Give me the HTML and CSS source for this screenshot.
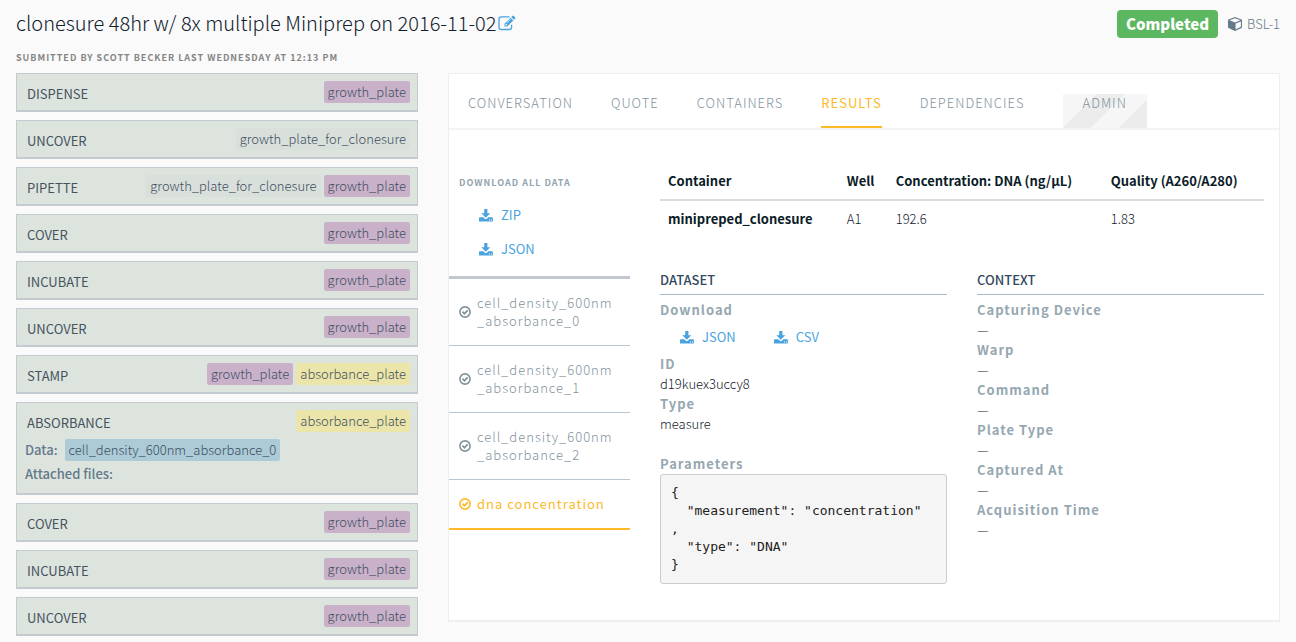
FILE: index.html
```html
<!DOCTYPE html>
<html lang="en">
<head>
<meta charset="utf-8">
<title>clonesure 48hr w/ 8x multiple Miniprep on 2016-11-02</title>
<link rel="stylesheet" href="styles.css">
</head>
<body>
<svg class="sprite" aria-hidden="true">
  <symbol id="download" viewBox="0 0 14 13"><path fill-rule="evenodd" d="M5.200 0h3.200v4.300h2.900L6.800 8.800 2.300 4.300h2.900zM.6 8.300h3.700l1.500 1.500q1 .8 2 0l1.500-1.500h3.900q.7 0 .7.700v2.900q0 .7-.7.700H.6q-.6 0-.6-.7V9q0-.7.6-.7zM10 10.500v1h1v-1zm2 0v1h1v-1z"/></symbol>
  <symbol id="check" viewBox="0 0 12 12"><circle cx="6" cy="6" r="5.100" fill="none" stroke="currentColor" stroke-width="1.600"/><path d="M3.400 5.700l2 2 3.300-3.300" fill="none" stroke="currentColor" stroke-width="1.700"/></symbol>
</svg>
<header class="header">
  <div class="title-row">
    <h1 class="title">clonesure 48hr w/ 8x multiple Miniprep on 2016-11-02</h1>
    <button class="edit" type="button" aria-label="Edit title">
      <svg class="edit-icon" viewBox="0 0 18 16"><path d="M11.500 1.900H3.300Q1 1.900 1 4.200v8Q1 14.500 3.300 14.500h8q2.300 0 2.300-2.300V9.700" fill="none" stroke="currentColor" stroke-width="1.300"/><path fill-rule="evenodd" d="M6.500 11.500V8.700l6-6 2.800 2.800-6 6zM7.500 9.300v1.200h1.200l.6-.6-1.200-1.200zM9 8l3.600-3.600-.4-.4L8.600 7.600zM13.200 2l1.100-1.100q.7-.6 1.400 0l1.400 1.400q.6.700 0 1.400L16 4.800z"/></svg>
    </button>
  </div>
  <div class="status">
    <span class="badge">Completed</span>
    <svg class="cube" viewBox="0 0 14 14"><path fill-rule="evenodd" d="M7 0l6.500 2.500q.5.200.5.800v6.800q0 .6-.5.900L7 14 .5 11q-.5-.3-.5-.9V3.300q0-.6.500-.8zM7 1.200L1.500 3.300 7 5.400l5.500-2.100zM7.600 6.500v5.900l5.300-2.600V4.500z"/></svg>
    <span class="bsl">BSL-1</span>
  </div>
</header>
<p class="submitted">Submitted by Scott Becker last Wednesday at 12:13 PM</p>
<div class="layout">
  <ol class="steps">
    <li class="step"><div class="step-head"><span class="op">Dispense</span><span class="tag growth">growth_plate</span></div></li>
    <li class="step"><div class="step-head"><span class="op">Uncover</span><span class="tag clonesure">growth_plate_for_clonesure</span></div></li>
    <li class="step"><div class="step-head"><span class="op">Pipette</span><span class="tag clonesure">growth_plate_for_clonesure</span><span class="tag growth">growth_plate</span></div></li>
    <li class="step"><div class="step-head"><span class="op">Cover</span><span class="tag growth">growth_plate</span></div></li>
    <li class="step"><div class="step-head"><span class="op">Incubate</span><span class="tag growth">growth_plate</span></div></li>
    <li class="step"><div class="step-head"><span class="op">Uncover</span><span class="tag growth">growth_plate</span></div></li>
    <li class="step"><div class="step-head"><span class="op">Stamp</span><span class="tag growth">growth_plate</span><span class="tag absorbance">absorbance_plate</span></div></li>
    <li class="step">
      <div class="step-head"><span class="op">Absorbance</span><span class="tag absorbance">absorbance_plate</span></div>
      <div class="step-data"><span>Data:</span><span class="tag data">cell_density_600nm_absorbance_0</span></div>
      <div class="step-files">Attached files:</div>
    </li>
    <li class="step"><div class="step-head"><span class="op">Cover</span><span class="tag growth">growth_plate</span></div></li>
    <li class="step"><div class="step-head"><span class="op">Incubate</span><span class="tag growth">growth_plate</span></div></li>
    <li class="step"><div class="step-head"><span class="op">Uncover</span><span class="tag growth">growth_plate</span></div></li>
  </ol>
  <main class="panel">
    <nav class="tabs">
      <a class="tab" href="#">Conversation</a>
      <a class="tab" href="#">Quote</a>
      <a class="tab" href="#">Containers</a>
      <a class="tab active" href="#">Results</a>
      <a class="tab" href="#">Dependencies</a>
      <a class="tab admin" href="#">Admin</a>
    </nav>
    <div class="results">
      <aside class="sidebar">
        <h2 class="side-title">Download all data</h2>
        <div class="side-links">
          <a class="dl" href="#"><svg class="dl-icon"><use href="#download"/></svg>ZIP</a>
          <a class="dl" href="#"><svg class="dl-icon"><use href="#download"/></svg>JSON</a>
        </div>
        <ul class="datasets">
          <li><a class="dataset" href="#"><svg class="check"><use href="#check"/></svg><span>cell_density_600nm<wbr>_absorbance_0</span></a></li>
          <li><a class="dataset" href="#"><svg class="check"><use href="#check"/></svg><span>cell_density_600nm<wbr>_absorbance_1</span></a></li>
          <li><a class="dataset" href="#"><svg class="check"><use href="#check"/></svg><span>cell_density_600nm<wbr>_absorbance_2</span></a></li>
          <li><a class="dataset selected" href="#"><svg class="check"><use href="#check"/></svg><span>dna concentration</span></a></li>
        </ul>
      </aside>
      <div class="detail">
        <table class="table">
          <thead><tr><th class="c-container">Container</th><th class="c-well">Well</th><th class="c-conc">Concentration: DNA (ng/µL)</th><th>Quality (A260/A280)</th></tr></thead>
          <tbody><tr><th scope="row">minipreped_clonesure</th><td>A1</td><td>192.6</td><td>1.83</td></tr></tbody>
        </table>
        <div class="info">
          <section>
            <h2 class="section-title">Dataset</h2>
            <h3 class="label">Download</h3>
            <div class="dl-row">
              <a class="dl" href="#"><svg class="dl-icon"><use href="#download"/></svg>JSON</a>
              <a class="dl" href="#"><svg class="dl-icon"><use href="#download"/></svg>CSV</a>
            </div>
            <dl class="list">
              <dt class="label">ID</dt><dd>d19kuex3uccy8</dd>
              <dt class="label">Type</dt><dd>measure</dd>
            </dl>
            <h3 class="label params">Parameters</h3>
            <pre class="code">{
  "measurement": "concentration"
,
  "type": "DNA"
}</pre>
          </section>
          <section>
            <h2 class="section-title">Context</h2>
            <dl class="list">
              <dt class="label">Capturing Device</dt><dd>—</dd>
              <dt class="label">Warp</dt><dd>—</dd>
              <dt class="label">Command</dt><dd>—</dd>
              <dt class="label">Plate Type</dt><dd>—</dd>
              <dt class="label">Captured At</dt><dd>—</dd>
              <dt class="label">Acquisition Time</dt><dd>—</dd>
            </dl>
          </section>
        </div>
      </div>
    </div>
  </main>
</div>
</body>
</html>
```
FILE: styles.css
```css
* { box-sizing: border-box; }
body {
  margin: 0;
  padding: 8px 16px 0;
  background: #fafafa;
  color: #14222d;
  font: 300 13px/20px "Noto Sans CJK SC", "Noto Sans", sans-serif;
}
h1, h2, h3, p, ol, ul, dl, dd, pre { margin: 0; padding: 0; }
ol, ul { list-style: none; }
a { text-decoration: none; }
svg { flex: none; fill: currentColor; }
.sprite { position: absolute; width: 0; height: 0; }

.header { display: flex; justify-content: space-between; align-items: flex-start; height: 32px; }
.title-row { display: flex; align-items: center; gap: 2px; }
.title { font-size: 20px; line-height: 30px; font-weight: 300; color: #10202c; }
.edit { padding: 0; border: 0; background: none; color: #4aa3df; display: flex; }
.edit-icon { width: 18px; height: 16px; }
.status { display: flex; align-items: center; padding-top: 2px; color: #64798a; }
.badge {
  margin-right: 10px;
  padding: 0 9px;
  border-radius: 4px;
  background: #5cb860;
  color: #fff;
  font-size: 15px;
  line-height: 28px;
  font-weight: 900;
}
.cube { width: 14px; height: 14px; margin-right: 5px; }
.submitted {
  margin-top: 8px;
  color: #858585;
  font-size: 9px;
  font-weight: 700;
  letter-spacing: 1px;
  text-transform: uppercase;
}

.layout {
  display: grid;
  grid-template-columns: 402fr 832fr;
  gap: 30px;
  align-items: start;
  margin-top: 5px;
}
.steps { display: grid; gap: 8px; padding-bottom: 6px; }
.step {
  padding: 7px 7px 7px 8px;
  border: 1px solid #c3cad0;
  border-width: 1px 1px 2px;
  background: #dde4dd;
  color: #3f4f60;
}
.step-head { display: flex; gap: 3px; height: 22px; }
.op {
  flex: 1;
  padding: 3px 2px 0;
  color: #46535f;
  font-weight: 400;
  text-transform: uppercase;
}
.tag { padding: 0 4px; border-radius: 2px; line-height: 22px; }
.growth { background: #c9b1ca; }
.clonesure { background: #d9dfdb; }
.absorbance { background: #ebe5a9; }
.step-data { display: flex; gap: 7px; margin-top: 7px; line-height: 22px; font-weight: 500; color: #64798c; }
.data { background: #adcad7; color: #3a4f60; font-weight: 300; }
.step-files { margin-top: 3px; padding-bottom: 2px; line-height: 20px; font-weight: 500; color: #64798c; }

.panel { min-width: 0; background: #fff; border: 1px solid #edf0f0; border-bottom-width: 2px; }
.tabs { display: flex; gap: 38px; padding: 20px 19px 0; border-bottom: 2px solid #f1f3f4; }
.tab {
  height: 34px;
  border-bottom: 2px solid transparent;
  color: #82939e;
  line-height: 18px;
  letter-spacing: 1px;
  text-transform: uppercase;
}
.tab.active { color: #fdb927; border-color: #fdb927; font-weight: 400; }
.tab.admin {
  padding: 0 20px;
  border: 0;
  background: linear-gradient(-45deg, #ececec 20px, #f6f6f6 20px, #f6f6f6 40px, #ececec 40px, #ececec 60px, #f6f6f6 60px);
}

.results { display: grid; grid-template-columns: 181fr 604fr; gap: 30px; padding: 33px 15px 36px 0; }
.side-title {
  margin: 10px 0 12px 10px;
  color: #93a4af;
  font-size: 9px;
  line-height: 20px;
  font-weight: 700;
  letter-spacing: 1px;
  text-transform: uppercase;
}
.side-links { display: grid; gap: 14px; padding: 0 30px 17px; }
.dl { display: inline-flex; align-items: center; gap: 8px; color: #4aa3df; font-weight: 400; }
.dl-icon { width: 14px; height: 13px; }
.datasets { border-top: 3px solid #c1c6cf; }
.dataset {
  display: flex;
  align-items: center;
  gap: 6px;
  padding: 15px 10px;
  border-bottom: 1px solid #bac6cd;
  color: #82939e;
  line-height: 18px;
  letter-spacing: 1px;
}
.check { width: 12px; height: 12px; }
.dataset.selected { color: #fdb927; border-bottom: 2px solid #fdb927; font-weight: 400; }

.table { width: 100%; table-layout: fixed; border-collapse: collapse; }
.table th, .table td { padding: 8px; text-align: left; }
.table th { font-weight: 700; color: #0b1c28; white-space: nowrap; }
.table thead th { border-bottom: 2px solid #ddd; }
.c-container { width: 29.6%; }
.c-well { width: 8.1%; }
.c-conc { width: 35.6%; }
.info { display: grid; grid-template-columns: 1fr 1fr; gap: 30px; margin-top: 32px; }
.section-title {
  height: 26px;
  border-bottom: 1px solid #a9b8c2;
  margin-bottom: 5px;
  font-size: 13px;
  line-height: 22px;
  font-weight: 500;
  color: #34495e;
  text-transform: uppercase;
}
.label { font-size: 13px; line-height: 20px; font-weight: 700; letter-spacing: 1px; color: #96a7b1; }
.dl-row { display: flex; gap: 38px; padding: 7px 20px; }
.params { margin-top: 20px; }
.code {
  padding: 9px 10px;
  border: 1px solid #ccc;
  border-radius: 3px;
  background: #f5f5f5;
  color: #222;
  font: 13px/18px "DejaVu Sans Mono", monospace;
  white-space: pre-wrap;
}
```
